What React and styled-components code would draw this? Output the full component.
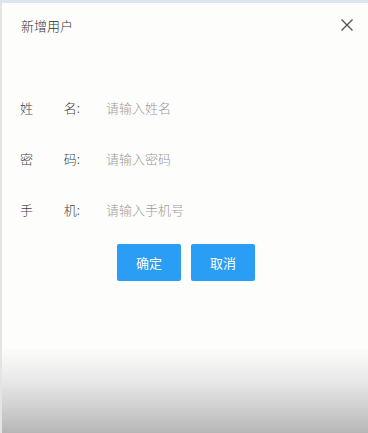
import React from 'react';
import styled, { createGlobalStyle } from 'styled-components';

const GlobalStyle = createGlobalStyle`
  html, body {
    margin: 0;
    padding: 0;
    background: #fdfdfc;
    font-family: "Noto Sans CJK SC", "Liberation Sans", sans-serif;
  }
`;

const Page = styled.div`
  width: 368px;
  height: 433px;
  display: flex;
  flex-direction: column;
  border-top: 3px solid #dfe5ee;
  border-left: 2px solid #e4e4e4;
  box-sizing: border-box;
  background: linear-gradient(
    to bottom,
    #fdfdfc 0%,
    #fdfdfc 80%,
    #e8e8e8 88%,
    #c8c8c8 96%,
    #b6b6b6 100%
  );
  overflow: hidden;
`;

const Header = styled.div`
  height: 44px;
  display: flex;
  align-items: center;
  justify-content: space-between;
  padding: 0 14px 0 19px;
`;

const Title = styled.span`
  font-size: 13px;
  font-weight: 300;
  color: #333;
`;

const Close = styled.button`
  border: 0;
  background: none;
  padding: 0;
  display: flex;
  color: #555;
  cursor: pointer;
`;

const Form = styled.div`
  display: flex;
  flex-direction: column;
  gap: 26px;
  padding: 48px 0 0 18px;
`;

const Row = styled.div`
  display: flex;
  align-items: center;
  height: 25px;
`;

const Label = styled.label`
  width: 86px;
  display: flex;
  justify-content: space-between;
  padding-right: 26px;
  box-sizing: border-box;
  font-size: 13px;
  font-weight: 300;
  color: #444;
`;

const Input = styled.input`
  border: 0;
  outline: none;
  background: transparent;
  font-family: inherit;
  font-size: 13px;
  font-weight: 300;
  width: 150px;
  padding: 0;
  color: #333;
  &::placeholder {
    color: #9a9a9a;
  }
`;

const Actions = styled.div`
  display: flex;
  justify-content: center;
  gap: 10px;
  padding: 22px 0 0 2px;
`;

const Button = styled.button`
  width: 64px;
  height: 37px;
  border: 0;
  border-radius: 2px;
  background: #2a9df4;
  color: #fff;
  font-family: inherit;
  font-size: 13px;
  cursor: pointer;
`;

const fields = [
  { a: '姓', b: '名:', placeholder: '请输入姓名' },
  { a: '密', b: '码:', placeholder: '请输入密码' },
  { a: '手', b: '机:', placeholder: '请输入手机号' },
];

export default function App() {
  return (
    <>
      <GlobalStyle />
      <Page>
        <Header>
          <Title>新增用户</Title>
          <Close aria-label="关闭">
            <svg width="14" height="14" viewBox="0 0 14 14">
              <path d="M1.5 1.5 L12.5 12.5 M12.5 1.5 L1.5 12.5" stroke="currentColor" strokeWidth="1.4" />
            </svg>
          </Close>
        </Header>
        <Form>
          {fields.map((f) => (
            <Row key={f.placeholder}>
              <Label>
                <span>{f.a}</span>
                <span>{f.b}</span>
              </Label>
              <Input placeholder={f.placeholder} />
            </Row>
          ))}
        </Form>
        <Actions>
          <Button>确定</Button>
          <Button>取消</Button>
        </Actions>
      </Page>
    </>
  );
}
